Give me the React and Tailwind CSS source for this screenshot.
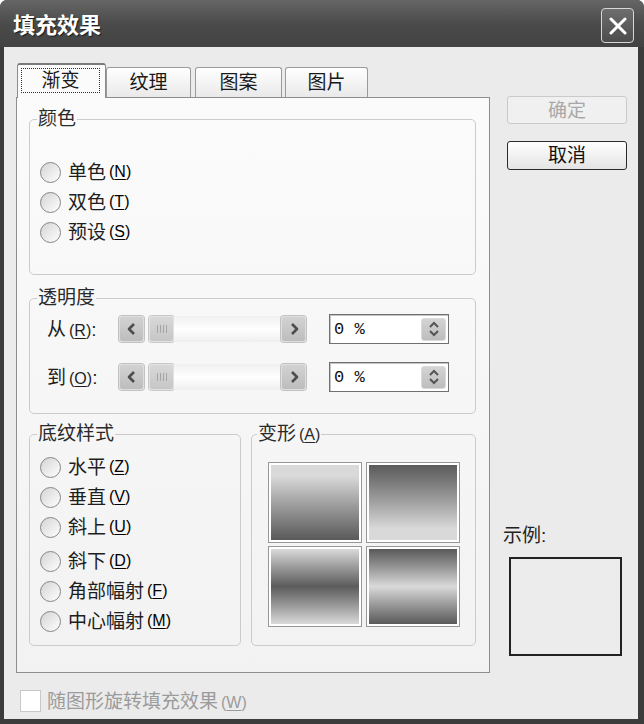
import React from 'react';

function Key({ k }) {
  return (
    <span className="ml-[3px] text-[16px] font-['Liberation_Sans',sans-serif]">
      (<span className="underline underline-offset-2">{k}</span>)
    </span>
  );
}

function Radio({ label, k, className }) {
  return (
    <div className={`flex items-center h-[30px] ${className || ''}`}>
      <span className="w-[21px] h-[21px] rounded-full border-[1.5px] border-[#858585] bg-linear-to-br from-[#d4d4d4] to-white shrink-0" />
      <span className="ml-[7px] text-[19px] leading-none text-[#1e1e1e]">{label}</span>
      <Key k={k} />
    </div>
  );
}

function Group({ title, className, children }) {
  return (
    <fieldset className={`border border-[#cbcbcb] rounded-[5px] px-[10px] ${className || ''}`}>
      <legend className="-ml-[3px] px-[1px] text-[19px] leading-[20px] text-[#2a2a2a]">{title}</legend>
      {children}
    </fieldset>
  );
}

function Chevron({ dir }) {
  const pts = dir === 'left' ? '7,1 2,6 7,11' : '3,1 8,6 3,11';
  return (
    <svg width="10" height="12" viewBox="0 0 10 12">
      <polyline points={pts} fill="none" stroke="#4d4d4d" strokeWidth="2.6" strokeLinejoin="round" />
    </svg>
  );
}

function ScrollBtn({ children }) {
  return (
    <div className="w-[25px] h-[26px] rounded-[3px] border border-[#dedede] bg-linear-to-b from-[#d2d2d2] to-[#bdbdbd] shadow-[0_0_0_1px_#c2c2c2] flex items-center justify-center">
      {children}
    </div>
  );
}

function Scroll() {
  return (
    <div className="flex items-center h-[26px] w-[187px]">
      <ScrollBtn>
        <Chevron dir="left" />
      </ScrollBtn>
      <div className="ml-[5px] w-[25px] h-[26px] rounded-[3px] border border-[#e2e2e2] bg-linear-to-b from-[#d8d8d8] to-[#c6c6c6] shadow-[0_0_0_1px_#c8c8c8] flex items-center justify-center gap-[2px]">
        <span className="w-px h-[8px] bg-[#a5a5a5]" />
        <span className="w-px h-[8px] bg-[#a5a5a5]" />
        <span className="w-px h-[8px] bg-[#a5a5a5]" />
        <span className="w-px h-[8px] bg-[#a5a5a5]" />
      </div>
      <div className="flex-1 h-[26px] bg-linear-to-b from-[#f0f0f0] via-white to-[#efefef]" />
      <ScrollBtn>
        <Chevron dir="right" />
      </ScrollBtn>
    </div>
  );
}

function Spin() {
  return (
    <div className="ml-[23px] w-[120px] h-[30px] border border-[#707070] shadow-[inset_1px_1px_0_#c4c4c4] bg-white flex items-center">
      <span className="ml-[4px] text-[17px] leading-none font-['Liberation_Mono',monospace] text-[#111]">0 %</span>
      <div className="ml-auto mr-[2px] w-[25px] h-[23px] rounded-[3px] bg-linear-to-b from-[#d4d4d4] to-[#bdbdbd] border border-[#dadada] flex flex-col items-center justify-center gap-[2px]">
        <svg width="12" height="7" viewBox="0 0 12 7">
          <polyline points="2,6 6,2 10,6" fill="none" stroke="#555" strokeWidth="2" />
        </svg>
        <svg width="12" height="7" viewBox="0 0 12 7">
          <polyline points="2,1 6,5 10,1" fill="none" stroke="#555" strokeWidth="2" />
        </svg>
      </div>
    </div>
  );
}

function Cell({ grad }) {
  return (
    <div className="h-[81px] border border-[#979797] p-[2px] bg-white">
      <div className={`w-full h-full ${grad}`} />
    </div>
  );
}

export default function App() {
  return (
    <div className="w-[644px] h-[724px] bg-[#3c3c3c] rounded-t-[7px] flex flex-col overflow-hidden font-['Liberation_Sans','Noto_Sans_CJK_SC',sans-serif]">
      <div className="h-[47px] pt-[4px] flex items-center bg-linear-to-b from-[#666666] via-[#4b4b4b] to-[#424242]">
        <span className="ml-[13px] text-[22px] leading-none font-bold text-white [text-shadow:1px_1px_1px_#1a1a1a]">
          填充效果
        </span>
        <div className="ml-auto mr-[10px] w-[33px] h-[35px] rounded-[4px] border border-[#d6d6d6] bg-linear-to-b from-[#6e6e6e] to-[#4c4c4c] flex items-center justify-center">
          <svg width="18" height="18" viewBox="0 0 18 18">
            <line x1="2" y1="2" x2="16" y2="16" stroke="white" strokeWidth="3" strokeLinecap="round" />
            <line x1="16" y1="2" x2="2" y2="16" stroke="white" strokeWidth="3" strokeLinecap="round" />
          </svg>
        </div>
      </div>

      <div className="flex-1 ml-[4px] mr-[6px] mb-[5px] bg-[#ebebeb] flex flex-col">
        <div className="flex">
          <div className="ml-[12px] pt-[16px] w-[474px]">
            <div className="h-[34px] flex items-end text-[19px] text-[#1a1a1a]">
              <div className="relative z-10 -mb-px ml-[1px] w-[89px] h-[35px] rounded-t-[3px] border border-b-0 border-[#8d8d8d] border-t-[2px] border-t-[#7a7a7a] bg-[#fbfbfb] pt-[3px] pl-[3px]">
                <div className="w-[79px] h-[25px] border border-dotted border-[#333] flex items-center justify-center leading-none">
                  渐变
                </div>
              </div>
              <div className="w-[85px] h-[30px] rounded-t-[3px] border border-b-0 border-[#9a9a9a] bg-linear-to-b from-white to-[#e9e9e9] flex items-center justify-center leading-none">
                纹理
              </div>
              <div className="ml-[4px] w-[87px] h-[30px] rounded-t-[3px] border border-b-0 border-[#9a9a9a] bg-linear-to-b from-white to-[#e9e9e9] flex items-center justify-center leading-none">
                图案
              </div>
              <div className="ml-[3px] w-[83px] h-[30px] rounded-t-[3px] border border-b-0 border-[#9a9a9a] bg-linear-to-b from-white to-[#e9e9e9] flex items-center justify-center leading-none">
                图片
              </div>
            </div>

            <div className="h-[576px] border border-[#8d8d8d] bg-linear-to-b from-[#fbfbfb] to-[#f2f2f2] pl-[12px] pr-[13px] pt-[11px]">
              <Group title="颜色" className="h-[166px]">
                <div className="pt-[28px]">
                  <Radio label="单色" k="N" />
                  <Radio label="双色" k="T" />
                  <Radio label="预设" k="S" />
                </div>
              </Group>

              <Group title="透明度" className="mt-[13px] h-[126px]">
                <div className="pt-[5px]">
                  <div className="flex items-center h-[32px]">
                    <span className="ml-[7px] w-[72px] text-[19px] leading-none text-[#1e1e1e]">
                      从<Key k="R" />:
                    </span>
                    <Scroll />
                    <Spin />
                  </div>
                  <div className="mt-[16px] flex items-center h-[32px]">
                    <span className="ml-[7px] w-[72px] text-[19px] leading-none text-[#1e1e1e]">
                      到<Key k="O" />:
                    </span>
                    <Scroll />
                    <Spin />
                  </div>
                </div>
              </Group>

              <div className="mt-[10px] flex gap-[10px]">
                <Group title="底纹样式" className="w-[212px] h-[222px]">
                  <div className="pt-[8px]">
                    <Radio label="水平" k="Z" />
                    <Radio label="垂直" k="V" />
                    <Radio label="斜上" k="U" />
                    <Radio label="斜下" k="D" className="mt-[4px]" />
                    <Radio label="角部幅射" k="F" />
                    <Radio label="中心幅射" k="M" />
                  </div>
                </Group>
                <fieldset className="w-[225px] h-[222px] border border-[#cbcbcb] rounded-[5px] pl-[16px]">
                  <legend className="-ml-[11px] px-[1px] text-[19px] leading-[20px] text-[#2a2a2a]">
                    变形<Key k="A" />
                  </legend>
                  <div className="pt-[17px] grid grid-cols-[94px_94px] gap-x-[4px] gap-y-[3px]">
                    <Cell grad="bg-linear-to-b from-[#d9d9d9] from-15% to-[#5a5a5a]" />
                    <Cell grad="bg-linear-to-b from-[#5a5a5a] to-[#d9d9d9] to-85%" />
                    <Cell grad="bg-linear-to-b from-[#dadada] via-[#5c5c5c] to-[#dadada]" />
                    <Cell grad="bg-linear-to-b from-[#5a5a5a] via-[#dadada] to-[#5a5a5a]" />
                  </div>
                </fieldset>
              </div>
            </div>
          </div>

          <div className="ml-[13px] flex flex-col">
            <div className="ml-[4px] mt-[49px] w-[120px] h-[28px] rounded-[3px] border border-[#cacaca] bg-[#f0f0f0] flex items-center justify-center text-[19px] leading-none text-[#a8a8a8]">
              确定
            </div>
            <div className="ml-[4px] mt-[17px] w-[120px] h-[29px] rounded-[3px] border border-[#2a2a2a] bg-linear-to-b from-white to-[#e4e4e4] flex items-center justify-center text-[19px] leading-none text-[#111]">
              取消
            </div>
            <div className="mt-[356px] text-[19px] leading-[20px] text-[#222]">示例:</div>
            <div className="ml-[6px] mt-[11px] w-[113px] h-[99px] border-2 border-[#222] bg-[#ececec]" />
          </div>
        </div>

        <div className="mt-[17px] ml-[16px] flex items-center h-[22px]">
          <span className="w-[21px] h-[22px] border border-[#c8c8c8] bg-white" />
          <span className="ml-[6px] text-[19px] leading-none text-[#9b9b9b]">
            随图形旋转填充效果<Key k="W" />
          </span>
        </div>
      </div>
    </div>
  );
}
